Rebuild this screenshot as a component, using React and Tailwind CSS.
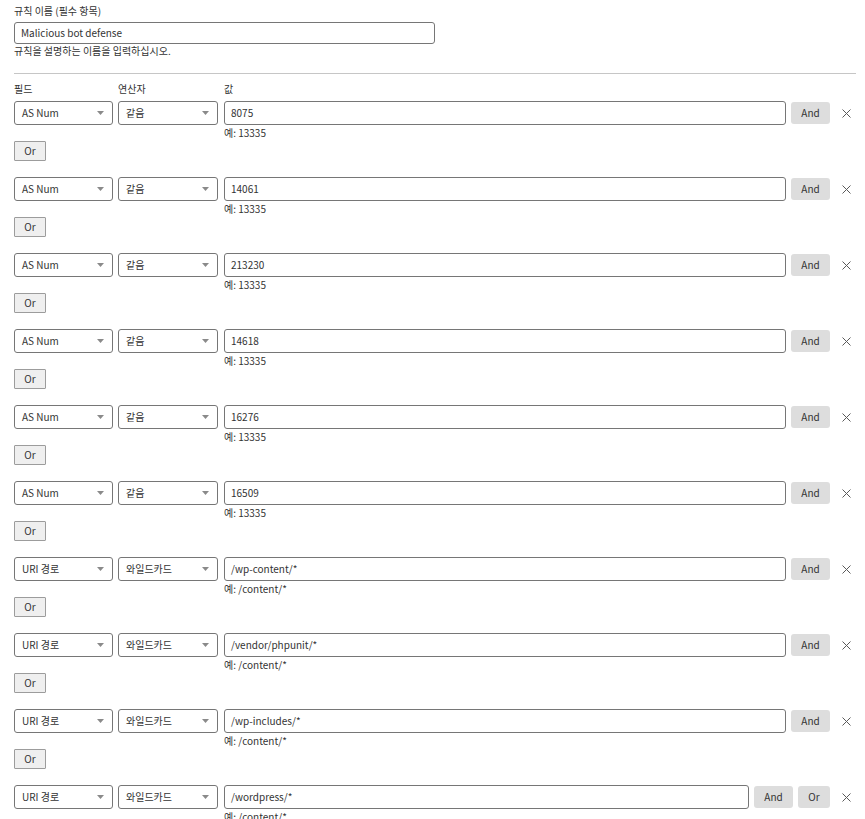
import React from 'react'

const rows = [
  { field: 'AS Num', op: '같음', value: '8075', hint: '예: 13335' },
  { field: 'AS Num', op: '같음', value: '14061', hint: '예: 13335' },
  { field: 'AS Num', op: '같음', value: '213230', hint: '예: 13335' },
  { field: 'AS Num', op: '같음', value: '14618', hint: '예: 13335' },
  { field: 'AS Num', op: '같음', value: '16276', hint: '예: 13335' },
  { field: 'AS Num', op: '같음', value: '16509', hint: '예: 13335' },
  { field: 'URI 경로', op: '와일드카드', value: '/wp-content/*', hint: '예: /content/*' },
  { field: 'URI 경로', op: '와일드카드', value: '/vendor/phpunit/*', hint: '예: /content/*' },
  { field: 'URI 경로', op: '와일드카드', value: '/wp-includes/*', hint: '예: /content/*' },
  { field: 'URI 경로', op: '와일드카드', value: '/wordpress/*', hint: '예: /content/*', last: true },
]

function Select({ value, className }) {
  return (
    <div className={`h-[24px] flex items-center justify-between rounded-[3px] border border-[#767676] bg-white pl-[7px] pr-[7px] ${className}`}>
      <span>{value}</span>
      <svg width="7" height="4" viewBox="0 0 7 4" className="mr-[1px]">
        <path d="M0 0 L7 0 L3.5 4 Z" fill="#8a8a8a" />
      </svg>
    </div>
  )
}

function Close() {
  return (
    <div className="w-[20px] h-[24px] flex items-center justify-center shrink-0">
      <svg width="9" height="9" viewBox="0 0 9 9">
        <path d="M0.5 0.5 L8.5 8.5 M8.5 0.5 L0.5 8.5" stroke="#5a5a5a" strokeWidth="1" />
      </svg>
    </div>
  )
}

function Row({ row }) {
  return (
    <div className="mb-[16px]">
      <div className="flex items-start">
        <Select value={row.field} className="w-[99px] shrink-0" />
        <Select value={row.op} className="w-[100px] shrink-0 ml-[5px]" />
        <div className="flex-1 ml-[6px]">
          <div className="h-[24px] flex items-center rounded-[3px] border border-[#767676] bg-white px-[6px]">
            {row.value}
          </div>
          <div className="h-[14px] leading-[14px] text-[10px] pt-[1px]">{row.hint}</div>
        </div>
        <button className="ml-[5px] h-[22px] mt-[1px] w-[39px] rounded-[3px] bg-[#dddddd] text-[#333]">And</button>
        {row.last && (
          <button className="ml-[5px] h-[22px] mt-[1px] w-[32px] rounded-[3px] bg-[#dddddd] text-[#333]">Or</button>
        )}
        <div className="ml-[6px]">
          <Close />
        </div>
      </div>
      {!row.last && (
        <button className="mt-[2px] h-[20px] w-[32px] border border-[#9c9c9c] bg-[#efefef] rounded-[1px] text-[#333]">Or</button>
      )}
    </div>
  )
}

export default function App() {
  return (
    <div
      className="bg-white text-[#333] text-[10px] leading-[14px] pl-[14px] pr-[9px] pt-[4px] min-h-[819px]"
      style={{ fontFamily: '"Noto Sans CJK KR", "Noto Sans", sans-serif' }}
    >
      <div>규칙 이름 (필수 항목)</div>
      <div className="mt-[4px] w-[421px] h-[22px] flex items-center rounded-[3px] border border-[#767676] px-[6px]">
        Malicious bot defense
      </div>
      <div className="leading-[13px]">규칙을 설명하는 이름을 입력하십시오.</div>
      <div className="mt-[16px] h-px bg-[#c6c6c6]" />

      <div className="flex mt-[8px]">
        <div className="w-[104px]">필드</div>
        <div className="w-[106px]">연산자</div>
        <div>값</div>
      </div>

      <div className="mt-[5px]">
        {rows.map((row, i) => (
          <Row key={i} row={row} />
        ))}
      </div>
    </div>
  )
}
